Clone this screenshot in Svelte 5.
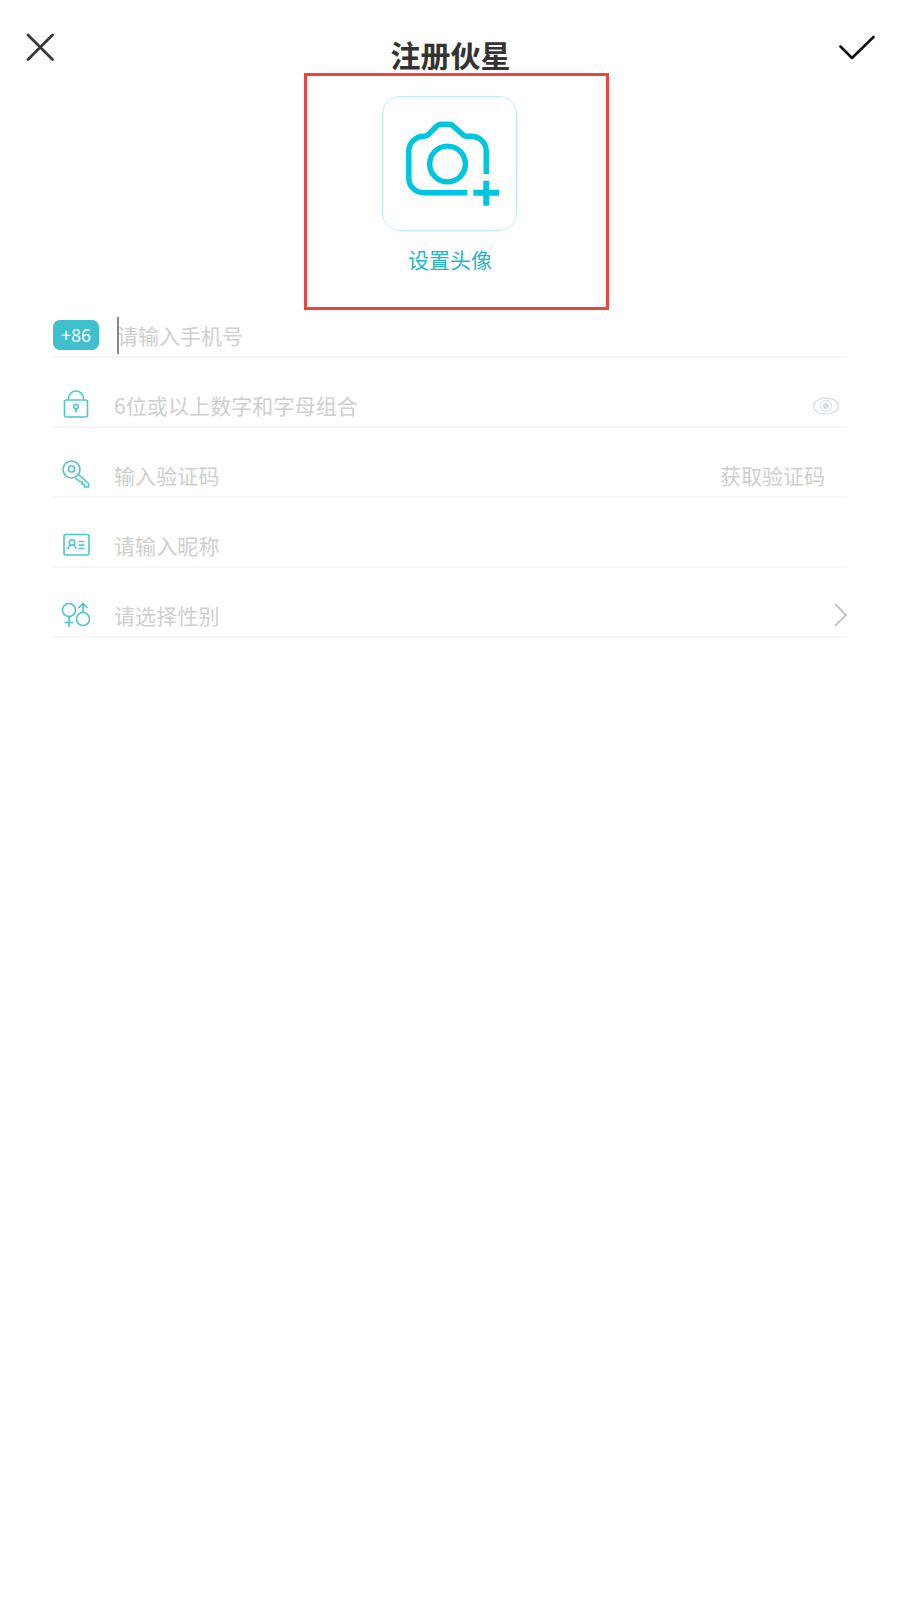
<script>
	const stroke = '#4cc5d4';
</script>

<div class="page">
	<header class="top">
		<svg class="close" width="28" height="28" viewBox="0 0 28 28">
			<path d="M2 2L26.500 26.500M26.500 2L2 26.500" stroke="#383838" stroke-width="2.800" stroke-linecap="round" fill="none" />
		</svg>
		<h1>注册伙星</h1>
		<svg class="check" width="36" height="26" viewBox="0 0 36 26">
			<path d="M1.5 11.5L13 23L34.5 2" stroke="#111" stroke-width="2.6" stroke-linecap="round" stroke-linejoin="round" fill="none" />
		</svg>
	</header>

	<section class="avatar">
		<div class="avatar-box">
			<svg width="134" height="134" viewBox="0 0 134 134">
				<g fill="none" stroke="#00c5e0" stroke-width="5.5">
					<path d="M104 77V54a15 15 0 0 0-15-15h-5q-2 0-4-2L71 29q-2-2-4-2H58q-2 0-4 2L46 37q-2 2-4 2h-1a15 15 0 0 0-15 15V81a15 15 0 0 0 15 15H85" />
					<circle cx="65" cy="67" r="18" />
				</g>
				<path d="M91 96H117M104 84V109" fill="none" stroke="#00c5e0" stroke-width="6" />
			</svg>
		</div>
		<div class="avatar-label">设置头像</div>
		<div class="annot"></div>
	</section>

	<form class="fields">
		<div class="row">
			<span class="badge">+86</span>
			<span class="text first"><i class="cursor"></i>请输入手机号</span>
		</div>
		<div class="row">
			<span class="ico lock">
				<svg width="28" height="28" viewBox="0 0 28 28" fill="none" stroke={stroke} stroke-width="1.6">
					<path d="M6.500 10V8.500a7.500 7.500 0 0 1 15 0V10" />
					<rect x="2.500" y="10" width="23" height="17" rx="2" />
					<circle cx="14" cy="16.500" r="2.300" />
					<path d="M14 19v3.500" />
				</svg>
			</span>
			<span class="text">6位或以上数字和字母组合</span>
			<svg class="eye" width="28" height="20" viewBox="0 0 28 20" fill="none">
				<ellipse cx="14" cy="10" rx="12.500" ry="8" stroke="#dbe3ea" stroke-width="1.500" />
				<circle cx="14" cy="10" r="5.500" stroke="#dbe3ea" stroke-width="1.300" />
				<circle cx="14" cy="10" r="3" fill="#d5dee6" />
			</svg>
		</div>
		<div class="row">
			<span class="ico key">
				<svg width="28" height="28" viewBox="0 0 28 28" fill="none" stroke={stroke} stroke-width="1.6">
					<circle cx="9.500" cy="9.500" r="8.500" />
					<circle cx="9.500" cy="9" r="3" />
					<path d="M16.500 14.500L26.500 23.500V27H22.500V24.500H20V21.500H17.500L13.500 18" />
				</svg>
			</span>
			<span class="text">输入验证码</span>
			<span class="get-code">获取验证码</span>
		</div>
		<div class="row">
			<span class="ico card">
				<svg width="27" height="24" viewBox="0 0 27 24" fill="none" stroke={stroke} stroke-width="1.6">
					<rect x="1" y="1.500" width="25" height="20.500" rx="1.500" />
					<circle cx="9" cy="9.500" r="2.700" />
					<path d="M5 16c.5-3 2-4 4-4s3.500 1 4 4" />
					<path d="M15.500 8.500h6M15.500 12h6M15.500 15.500h6" />
				</svg>
			</span>
			<span class="text">请输入昵称</span>
		</div>
		<div class="row">
			<span class="ico gender">
				<svg width="30" height="26" viewBox="0 0 30 26" fill="none" stroke={stroke} stroke-width="1.6">
					<circle cx="8" cy="8" r="6.500" />
					<path d="M8 14.500V25M3.500 20.500H12.500" />
					<circle cx="22" cy="17" r="6.500" />
					<path d="M22 10.500V1.500M17.500 6L22 1.500L26.500 6" />
				</svg>
			</span>
			<span class="text">请选择性别</span>
			<svg class="chev" width="13" height="24" viewBox="0 0 13 24" fill="none">
				<path d="M1 1L12 12L1 23" stroke="#c8c8c8" stroke-width="2.200" />
			</svg>
		</div>
	</form>
</div>

<style>
	:global(body) {
		margin: 0;
		background: #fff;
	}
	.page {
		width: 900px;
		height: 1600px;
		font-family: "Noto Sans CJK SC", "Noto Sans", sans-serif;
		background: #fff;
		overflow: hidden;
	}
	.top {
		display: grid;
		grid-template-columns: 1fr auto 1fr;
		align-items: start;
		height: 96px;
		padding: 33px 25px 0 26px;
		box-sizing: border-box;
	}
	.close {
		justify-self: start;
	}
	.check {
		justify-self: end;
		margin-top: 2px;
	}
	h1 {
		margin: 0;
		font-size: 30px;
		line-height: 42px;
		font-weight: 700;
		color: #333;
	}
	.avatar {
		position: relative;
		display: flex;
		flex-direction: column;
		align-items: center;
		height: 192px;
	}
	.avatar-box {
		width: 135px;
		height: 135px;
		margin-right: 1px;
		box-sizing: border-box;
		border: 1.5px solid #b8eff6;
		border-radius: 18px;
		display: flex;
		align-items: center;
		justify-content: center;
	}
	.avatar-label {
		margin-top: 11px;
		font-size: 21px;
		line-height: 34px;
		color: #22b7c9;
	}
	/* red annotation frame lying over the avatar block */
	.annot {
		position: absolute;
		left: 304px;
		top: -23px;
		width: 305px;
		height: 237px;
		box-sizing: border-box;
		border: 3px solid #ec4444;
	}
	.fields {
		margin: 0 53px;
	}
	.row {
		display: flex;
		align-items: flex-end;
		height: 70px;
		box-sizing: border-box;
		border-bottom: 2px solid #f6f6f6;
		padding-bottom: 5px;
		position: relative;
	}
	.badge {
		width: 46px;
		height: 30px;
		margin-bottom: 1px;
		background: #40bfcf;
		border-radius: 7px;
		color: #fff;
		font-size: 18px;
		line-height: 28px;
		text-align: center;
	}
	.ico {
		width: 61px;
		display: flex;
		padding-left: 9px;
		box-sizing: border-box;
		position: relative;
	}
	.lock {
		top: -3px;
		padding-left: 9px;
	}
	.key {
		top: -3px;
		padding-left: 9px;
	}
	.card {
		top: -4px;
		padding-left: 10px;
	}
	.gender {
		top: -3px;
		padding-left: 8px;
	}
	.text {
		font-size: 21px;
		letter-spacing: 0.1px;
		line-height: 32px;
		color: #cfcfcf;
	}
	.text.first {
		position: relative;
		margin-left: 18px;
		letter-spacing: 0;
	}
	.cursor {
		position: absolute;
		left: 0;
		top: -2px;
		width: 2px;
		height: 37px;
		background: #888;
	}
	.get-code {
		margin-left: auto;
		margin-right: 22px;
		font-size: 21px;
		line-height: 32px;
		color: #cfcfcf;
	}
	.eye {
		margin-left: auto;
		margin-right: 7px;
		position: relative;
		top: -5px;
	}
	.chev {
		margin-left: auto;
		position: relative;
		top: -4px;
	}
</style>
